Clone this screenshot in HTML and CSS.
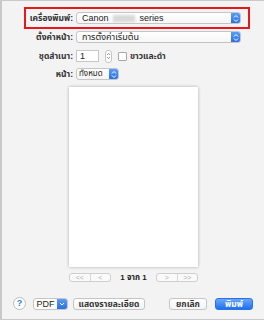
FILE: index.html
```html
<!DOCTYPE html>
<html lang="th">
<head>
    <meta charset="UTF-8">
    <title>พิมพ์</title>
    <link rel="stylesheet" href="styles.css">
</head>
<body>
    <div class="window">
        <div class="form">
            <div class="row highlight">
                <label class="label">เครื่องพิมพ์:</label>
                <div class="select wide">
                    <span class="value">Canon <span class="blur"></span> series</span>
                    <span class="arrows"><svg width="6" height="9" viewBox="0 0 6 9"><path d="M1 3.5 L3 1.5 L5 3.5 M1 5.5 L3 7.5 L5 5.5" fill="none" stroke="#fff" stroke-width="1"/></svg></span>
                </div>
            </div>
            <div class="row preset">
                <label class="label">ตั้งค่าหน้า:</label>
                <div class="select wide">
                    <span class="value">การตั้งค่าเริ่มต้น</span>
                    <span class="arrows"><svg width="6" height="9" viewBox="0 0 6 9"><path d="M1 3.5 L3 1.5 L5 3.5 M1 5.5 L3 7.5 L5 5.5" fill="none" stroke="#fff" stroke-width="1"/></svg></span>
                </div>
            </div>
            <div class="row copies">
                <label class="label">ชุดสำเนา:</label>
                <div class="field">1</div>
                <div class="stepper"><svg width="6" height="10" viewBox="0 0 6 10"><path d="M1.5 3.5 L3 2 L4.5 3.5 M1.5 6.5 L3 8 L4.5 6.5" fill="none" stroke="#555" stroke-width="0.9"/></svg></div>
                <span class="check"></span>
                <span class="check-label">ขาวและดำ</span>
            </div>
            <div class="row">
                <label class="label">หน้า:</label>
                <div class="select small">
                    <span class="value">ทั้งหมด</span>
                    <span class="arrows"><svg width="6" height="9" viewBox="0 0 6 9"><path d="M1 3.5 L3 1.5 L5 3.5 M1 5.5 L3 7.5 L5 5.5" fill="none" stroke="#fff" stroke-width="1"/></svg></span>
                </div>
            </div>
        </div>

        <div class="preview">
            <div class="paper"></div>
        </div>

        <div class="pager">
            <div class="seg">
                <span>&lt;&lt;</span>
                <span>&lt;</span>
            </div>
            <span class="count">1 จาก 1</span>
            <div class="seg">
                <span>&gt;</span>
                <span>&gt;&gt;</span>
            </div>
        </div>

        <div class="actions">
            <span class="help">?</span>
            <div class="pdf">
                <span class="pdf-text">PDF</span>
                <span class="pdf-drop"><svg width="6" height="4" viewBox="0 0 6 4"><path d="M1 1 L3 3 L5 1" fill="none" stroke="#fff" stroke-width="1"/></svg></span>
            </div>
            <button class="btn details">แสดงรายละเอียด</button>
            <button class="btn cancel">ยกเลิก</button>
            <button class="btn print">พิมพ์</button>
        </div>
    </div>
</body>
</html>
```

FILE: styles.css
```css
body {
    margin: 0;
    background-color: #fff;
    font-family: "Liberation Sans", "Noto Sans Thai", "Noto Sans", "DejaVu Sans", sans-serif;
    font-size: 9px;
    color: #222;
}
.window {
    width: 264px;
    height: 320px;
    background-color: #f3f3f3;
    border-top: 1px solid #c9c9c9;
    border-left: 2px solid #c9c9c9;
    border-bottom: 1px solid #c9c9c9;
    box-sizing: border-box;
    display: flex;
    flex-direction: column;
}
.form {
    padding: 6px 0 0 22px;
    display: flex;
    flex-direction: column;
}
.row {
    display: flex;
    align-items: center;
    height: 12px;
    margin-left: 2px;
    margin-top: 6px;
}
.row.highlight {
    margin: 0;
    width: 222px;
    height: 18px;
    border: 2px solid #e8171a;
    padding: 0;
}
.row.preset {
    margin-top: 2px;
}
.row.copies {
    margin-top: 7px;
}
.label {
    width: 47px;
    margin-right: 3px;
    text-align: right;
    font-weight: bold;
    font-size: 8.5px;
    color: #333;
    white-space: nowrap;
}
.select {
    height: 12px;
    display: flex;
    background: linear-gradient(#fff, #f6f6f6);
    border: 1px solid #c5c5c5;
    border-radius: 3px;
    box-sizing: border-box;
    overflow: hidden;
}
.select.wide {
    width: 165px;
}
.select.small {
    width: 43px;
}
.select .value {
    flex: 1;
    padding-left: 5px;
    line-height: 10px;
    white-space: nowrap;
    font-size: 9px;
    overflow: hidden;
}
.select.small .value {
    padding-left: 2px;
    font-size: 8px;
}
.blur {
    display: inline-block;
    width: 22px;
    height: 7px;
    background-color: #d9d9d9;
    vertical-align: -1px;
    margin: 0 2px;
    filter: blur(1px);
}
.arrows {
    width: 9px;
    flex: none;
    background: linear-gradient(#5a9cf8, #2a6fe6);
    display: flex;
    align-items: center;
    justify-content: center;
}
.field {
    width: 23px;
    height: 12px;
    box-sizing: border-box;
    background-color: #fff;
    border: 1px solid #c7c7c7;
    padding-left: 3px;
    line-height: 10px;
}
.stepper {
    width: 7px;
    height: 13px;
    margin-left: 6px;
    box-sizing: border-box;
    border: 1px solid #c7c7c7;
    border-radius: 3px;
    background-color: #fff;
    display: flex;
    align-items: center;
    justify-content: center;
}
.check {
    width: 7px;
    height: 7px;
    margin-left: 6px;
    background-color: #fff;
    border: 1px solid #a8a8a8;
    border-radius: 1px;
}
.check-label {
    margin-left: 3px;
    font-weight: bold;
    font-size: 8.5px;
    color: #333;
}
.preview {
    display: flex;
    padding: 7px 0 0 67px;
}
.paper {
    width: 129px;
    height: 180px;
    background-color: #fff;
    box-shadow: 0 0 3px rgba(0, 0, 0, 0.3);
}
.pager {
    display: flex;
    align-items: center;
    margin: 6px 0 0 67px;
    height: 9px;
}
.seg {
    display: flex;
    width: 42px;
    height: 9px;
    box-sizing: border-box;
    border: 1px solid #cfcfcf;
    border-radius: 3px;
    background-color: #fafafa;
}
.seg span {
    flex: 1;
    text-align: center;
    font-size: 7px;
    line-height: 7px;
    color: #b0b0b0;
}
.seg span + span {
    border-left: 1px solid #d8d8d8;
}
.count {
    width: 45px;
    text-align: center;
    font-weight: bold;
    font-size: 8px;
}
.actions {
    display: flex;
    align-items: center;
    margin: 15px 0 0 11px;
    height: 13px;
}
.help {
    width: 13px;
    height: 13px;
    box-sizing: border-box;
    border: 1px solid #bdbdbd;
    border-radius: 50%;
    background-color: #fff;
    color: #2a7bf0;
    font-size: 9px;
    font-weight: bold;
    text-align: center;
    line-height: 11px;
}
.pdf {
    display: flex;
    width: 35px;
    height: 12px;
    margin-left: 7px;
    box-sizing: border-box;
    border: 1px solid #c5c5c5;
    border-radius: 3px;
    overflow: hidden;
    background-color: #fff;
}
.pdf-text {
    flex: 1;
    text-align: center;
    line-height: 10px;
    font-size: 9px;
}
.pdf-drop {
    width: 10px;
    background: linear-gradient(#5a9cf8, #2a6fe6);
    display: flex;
    align-items: center;
    justify-content: center;
}
.btn {
    height: 12px;
    padding: 0;
    box-sizing: border-box;
    border: 1px solid #c5c5c5;
    border-radius: 3px;
    background: linear-gradient(#fff, #f4f4f4);
    font-family: inherit;
    font-size: 8.5px;
    font-weight: bold;
    color: #333;
    line-height: 10px;
}
.details {
    width: 72px;
    margin-left: 5px;
}
.cancel {
    width: 38px;
    margin-left: 24px;
}
.print {
    width: 38px;
    margin-left: 8px;
    border-color: #2a72e8;
    background: linear-gradient(#6aa8fb, #1f6ff0);
    color: #fff;
}
```
